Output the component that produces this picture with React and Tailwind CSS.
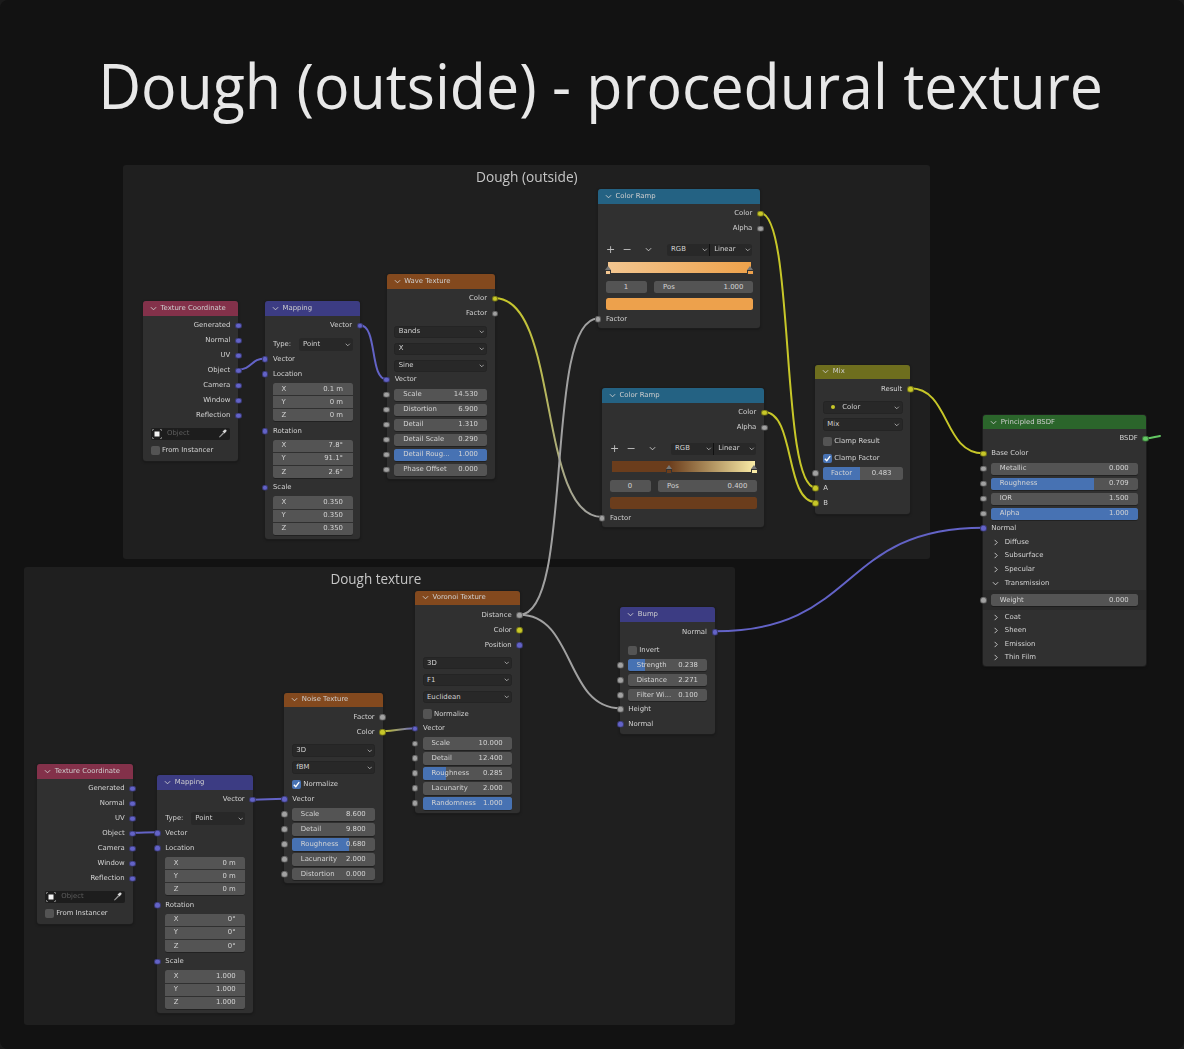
import React from "react";

const BLUE = "#6363c7", GRAY = "#a1a1a1", YEL = "#c7c729", GRN = "#63c763";

function Chev({ className = "", right = false }) {
  return (
    <svg viewBox="0 0 8 8" className={"shrink-0 " + className} fill="none" stroke="currentColor" strokeWidth="1">
      <path d={right ? "M3 1 L6 4 L3 7" : "M1 2.5 L4 5.5 L7 2.5"} />
    </svg>
  );
}

function Socket({ color, side }) {
  return (
    <span
      className={"absolute top-1/2 -translate-y-1/2 w-[6.6px] h-[6.6px] rounded-full border-[0.5px] border-black/40 z-10 " + (side === "left" ? "-left-[3.3px]" : "-right-[3.3px]")}
      style={{ backgroundColor: color }}
    />
  );
}

function Node({ className, head, title, children }) {
  return (
    <div className={"absolute rounded-[3px] bg-[#303030] shadow-[0_0_0_1px_#1c1c1c,0_1px_3px_rgba(0,0,0,0.45)] flex flex-col text-[#d4d4d4] text-[6.9px] leading-none [font-family:'DejaVu_Sans',sans-serif] blur-[0.3px] " + className}>
      <div className={"h-[14.3px] shrink-0 rounded-t-[3px] flex items-center pl-[7px] gap-[3.5px] text-[#cfcfcf] " + head}>
        <Chev className="w-[7px] h-[7px]" />
        <span className="whitespace-nowrap">{title}</span>
      </div>
      {children}
    </div>
  );
}

function Out({ label, color, className = "" }) {
  return (
    <div className={"relative h-[15px] shrink-0 flex items-center justify-end pr-[8px] " + className}>
      <span>{label}</span>
      <Socket color={color} side="right" />
    </div>
  );
}

function In({ label, color, className = "" }) {
  return (
    <div className={"relative h-[15px] shrink-0 flex items-center pl-[8px] " + className}>
      <span>{label}</span>
      <Socket color={color} side="left" />
    </div>
  );
}

function Slider({ label, value, fill = 0, className = "", socket = true }) {
  return (
    <div className={"relative h-[15px] shrink-0 flex items-center px-[7.5px] " + className}>
      {socket && <Socket color={GRAY} side="left" />}
      <div className="relative flex-1 h-[12.5px] rounded-[2.5px] bg-[#545454] overflow-hidden flex items-center justify-between pl-[9px] pr-[9.5px] shadow-[0_1px_0_rgba(0,0,0,0.3)]">
        {fill > 0 && <div className="absolute left-0 top-0 bottom-0 bg-[#4772b3]" style={{ width: fill * 100 + "%" }} />}
        <span className="relative whitespace-nowrap">{label}</span>
        <span className="relative whitespace-nowrap">{value}</span>
      </div>
    </div>
  );
}

function Drop({ label, className = "", dot = false }) {
  return (
    <div className={"h-[17px] shrink-0 flex items-center px-[7.5px] " + className}>
      <div className="flex-1 h-[12.5px] rounded-[2.5px] bg-[#282828] border border-[#242424] flex items-center justify-between pl-[3.5px] pr-[2px]">
        <span className="flex items-center gap-[7px]">
          {dot && <span className="w-[4px] h-[4px] rounded-full ml-[4px] bg-[#c7c729]" />}
          {label}
        </span>
        <Chev className="w-[5.5px] h-[5.5px]" />
      </div>
    </div>
  );
}

function Check({ label, checked = false, className = "" }) {
  return (
    <div className={"h-[17px] shrink-0 flex items-center pl-[7.5px] gap-[2px] " + className}>
      <span className={"w-[9.5px] h-[9.5px] rounded-[2px] flex items-center justify-center " + (checked ? "bg-[#4772b3]" : "bg-[#545454]")}>
        {checked && (
          <svg viewBox="0 0 10 10" className="w-[9px] h-[9px]" fill="none" stroke="#fff" strokeWidth="1.5">
            <path d="M2 5.2 L4.2 7.4 L8 2.4" />
          </svg>
        )}
      </span>
      <span>{label}</span>
    </div>
  );
}

function Xyz({ rows, className = "" }) {
  return (
    <div className={"mx-[7.5px] mt-[1.3px] shrink-0 flex flex-col gap-[1px] rounded-[2.5px] overflow-hidden shadow-[0_1px_0_rgba(0,0,0,0.3)] " + className}>
      {rows.map(([a, v]) => (
        <div key={a} className="h-[12.1px] bg-[#545454] flex items-center justify-between pl-[9px] pr-[9.5px]">
          <span>{a}</span>
          <span>{v}</span>
        </div>
      ))}
    </div>
  );
}

function TexCoord({ className }) {
  return (
    <Node className={className} head="bg-[#83314a]" title="Texture Coordinate">
      <div className="h-[2.5px] shrink-0" />
      {["Generated", "Normal", "UV", "Object", "Camera", "Window", "Reflection"].map((l) => (
        <Out key={l} label={l} color={BLUE} />
      ))}
      <div className="mt-[4.5px] mx-[8px] h-[12px] shrink-0 rounded-[2px] bg-[#1d1d1d] flex items-center pl-[1px] pr-[3px]">
        <svg viewBox="0 0 10 10" className="w-[10px] h-[10px] shrink-0">
          <rect x="2.5" y="2.5" width="5" height="5" fill="#f2f2f2" />
          <path d="M0.5 2 V0.5 H2 M8 0.5 H9.5 V2 M9.5 8 V9.5 H8 M2 9.5 H0.5 V8" stroke="#8a8a8a" fill="none" strokeWidth="0.8" />
        </svg>
        <span className="ml-[5px] text-[#5e5e5e] flex-1">Object</span>
        <svg viewBox="0 0 10 10" className="w-[9px] h-[9px] shrink-0">
          <path d="M1 9 L5.5 3.8 L6.8 5 L2 9.5 Z" fill="#9a9a9a" />
          <path d="M5 2.8 L7.2 5 L9.4 2.4 C10 1.4 8.6 0 7.6 0.6 Z" fill="#d8d8d8" />
        </svg>
      </div>
      <Check label="From Instancer" className="mt-[2.5px] mb-[2px]" />
    </Node>
  );
}

function Mapping({ className, loc, rot, scale }) {
  return (
    <Node className={className} head="bg-[#3c3c83]" title="Mapping">
      <div className="h-[2.8px] shrink-0" />
      <Out label="Vector" color={BLUE} />
      <div className="mt-[3.4px] h-[15px] shrink-0 flex items-center pl-[8px] pr-[7.5px]">
        <span className="w-[26px]">Type:</span>
        <div className="flex-1 h-[12.5px] rounded-[2.5px] bg-[#282828] flex items-center justify-between pl-[4px] pr-[2px]">
          <span>Point</span>
          <Chev className="w-[5.5px] h-[5.5px]" />
        </div>
      </div>
      <In label="Vector" color={BLUE} />
      <In label="Location" color={BLUE} />
      <Xyz rows={[["X", loc[0]], ["Y", loc[1]], ["Z", loc[2]]]} className="mb-[2.1px]" />
      <In label="Rotation" color={BLUE} />
      <Xyz rows={[["X", rot[0]], ["Y", rot[1]], ["Z", rot[2]]]} className="mb-[2.1px]" />
      <In label="Scale" color={BLUE} />
      <Xyz rows={[["X", scale[0]], ["Y", scale[1]], ["Z", scale[2]]]} className="mb-[4.2px]" />
    </Node>
  );
}

function Handle({ className, color }) {
  return (
    <span className={"absolute top-[4px] w-[7px] h-[9.5px] flex flex-col items-center " + className}>
      <span className="w-0 h-0 border-x-[3px] border-x-transparent border-b-[4px] border-b-[#777]" />
      <span className={"w-[6.6px] h-[5px] border-[0.5px] border-[#333] " + color} />
    </span>
  );
}

function Ramp({ className, idx, pos, swatch, bar, handles }) {
  return (
    <Node className={className} head="bg-[#246283]" title="Color Ramp">
      <div className="h-[2.5px] shrink-0" />
      <Out label="Color" color={YEL} />
      <Out label="Alpha" color={GRAY} />
      <div className="mt-[6.3px] h-[15px] shrink-0 flex items-center pl-[8px] pr-[8px]">
        <span className="w-[16.5px] text-[11px] leading-none text-[#bdbdbd]">+</span>
        <span className="w-[16.5px] text-[11px] leading-none text-[#bdbdbd]">−</span>
        <Chev className="w-[7px] h-[7px] ml-[5.5px] mr-[15.5px]" />
        <div className="flex-1 h-[12px] rounded-[2.5px] bg-[#282828] flex items-center">
          <div className="flex-1 h-full flex items-center justify-between pl-[4px] pr-[1.5px] border-r border-[#111]">
            <span>RGB</span>
            <Chev className="w-[5.5px] h-[5.5px]" />
          </div>
          <div className="flex-1 h-full flex items-center justify-between pl-[4px] pr-[1.5px]">
            <span>Linear</span>
            <Chev className="w-[5.5px] h-[5.5px]" />
          </div>
        </div>
      </div>
      <div className={"relative mt-[4.2px] mx-[9.6px] h-[11.7px] shrink-0 " + bar}>
        {handles}
      </div>
      <div className="mt-[8px] mx-[7.5px] h-[12px] shrink-0 flex gap-[7px]">
        <div className="w-[41px] rounded-[2.5px] bg-[#545454] flex items-center justify-center">{idx}</div>
        <div className="flex-1 rounded-[2.5px] bg-[#545454] flex items-center justify-between pl-[9.5px] pr-[9.5px]">
          <span>Pos</span>
          <span>{pos}</span>
        </div>
      </div>
      <div className={"mt-[5px] mx-[7.5px] h-[11.6px] shrink-0 rounded-[2.5px] " + swatch} />
      <In label="Factor" color={GRAY} className="mt-[1.7px] mb-[1.8px]" />
    </Node>
  );
}

function Panel({ label, open = false, className = "" }) {
  return (
    <div className={"h-[13.6px] shrink-0 flex items-center pl-[8.5px] gap-[6px] " + className}>
      <Chev className="w-[7px] h-[7px]" right={!open} />
      <span>{label}</span>
    </div>
  );
}

function Wire({ d, stroke, width = 2 }) {
  return <path d={d} fill="none" stroke={stroke} strokeWidth={width} strokeLinecap="round" />;
}

export default function App() {
  return (
    <div className="relative w-[1184px] h-[1049px] overflow-hidden bg-[#1b1b1b]">
      <div className="absolute inset-0 rounded-[8px] bg-[#121212]" />
      <h1 className="relative pt-[47px] pl-[18px] text-center text-[62px] leading-[76px] font-normal text-[#e8e8e8] whitespace-nowrap scale-x-[0.953] [font-family:'Open_Sans',sans-serif]">
        Dough (outside) - procedural texture
      </h1>

      <div className="absolute left-[123px] top-[165px] w-[807px] h-[394px] rounded-[3px] bg-[#1f1f1f] text-center pt-[3px] text-[14.5px] leading-[18px] text-[#c6c6c6] [font-family:'Open_Sans',sans-serif]">
        <span className="inline-block scale-x-[0.945]">Dough (outside)</span>
      </div>
      <div className="absolute left-[24px] top-[567px] w-[711px] h-[458px] rounded-[3px] bg-[#1f1f1f] text-center pt-[3px] pr-[7px] text-[14.5px] leading-[18px] text-[#c6c6c6] [font-family:'Open_Sans',sans-serif]">
        <span className="inline-block scale-x-[0.93]">Dough texture</span>
      </div>

      <svg className="absolute inset-0 w-[1184px] h-[1049px] blur-[0.3px]" viewBox="0 0 1184 1049">
        <defs>
          <linearGradient id="yg" gradientUnits="userSpaceOnUse" x1="495" y1="298" x2="602" y2="517">
            <stop offset="0" stopColor="#c7c729" />
            <stop offset="1" stopColor="#a1a1a1" />
          </linearGradient>
          <linearGradient id="yb" gradientUnits="userSpaceOnUse" x1="383" y1="731" x2="415" y2="728">
            <stop offset="0" stopColor="#c7c729" />
            <stop offset="1" stopColor="#6363c7" />
          </linearGradient>
        </defs>
        <Wire d="M238 369.5 C252 369.5 251 358.5 265 358.5" stroke={BLUE} />
        <Wire d="M360 325.3 C378 325.3 369 379.6 387 379.6" stroke={BLUE} />
        <Wire d="M495 298.3 C560 298.3 537 517 602 517" stroke="url(#yg)" />
        <Wire d="M519.7 614.7 C575 614.7 543 318.5 598 318.5" stroke="#a1a1a1" />
        <Wire d="M519.7 614.7 C575 614.7 565 708.3 620.3 708.3" stroke="#a1a1a1" />
        <Wire d="M760.3 213 C795 213 780 487.5 815.3 487.5" stroke={YEL} />
        <Wire d="M764.3 412 C795 412 785 502 815.3 502" stroke={YEL} />
        <Wire d="M910.3 388.3 C950 388.3 943 453.3 983.3 453.3" stroke={YEL} />
        <Wire d="M715 631.3 C860 631.3 838 527.7 983.3 527.7" stroke={BLUE} />
        <Wire d="M382.7 731.3 C398 731.3 399 728.3 415 728.3" stroke="url(#yb)" />
        <Wire d="M132.7 832.7 C145 832.7 145 832.3 157.3 832.3" stroke={BLUE} />
        <Wire d="M252.7 799.7 C268 799.7 268 798.7 284.3 798.7" stroke={BLUE} />
        <Wire d="M1145.7 438.3 C1152 438.3 1154 437 1160 436" stroke={GRN} />
      </svg>

      <TexCoord className="left-[143px] top-[301.3px] w-[95.3px]" />
      <Mapping className="left-[265px] top-[301.3px] w-[95px]" loc={["0.1 m", "0 m", "0 m"]} rot={["7.8°", "91.1°", "2.6°"]} scale={["0.350", "0.350", "0.350"]} />

      <Node className="left-[386.7px] top-[274.3px] w-[108.3px]" head="bg-[#83491e]" title="Wave Texture">
        <div className="h-[2.5px] shrink-0" />
        <Out label="Color" color={YEL} />
        <Out label="Factor" color={GRAY} />
        <Drop label="Bands" className="mt-[2.3px]" />
        <Drop label="X" />
        <Drop label="Sine" className="-mb-[2px]" />
        <In label="Vector" color={BLUE} />
        <Slider label="Scale" value="14.530" />
        <Slider label="Distortion" value="6.900" />
        <Slider label="Detail" value="1.310" />
        <Slider label="Detail Scale" value="0.290" />
        <Slider label="Detail Roug..." value="1.000" fill={1} />
        <Slider label="Phase Offset" value="0.000" className="mb-[1.7px]" />
      </Node>

      <Ramp
        className="left-[598px] top-[189.3px] w-[162.3px]"
        idx="1"
        pos="1.000"
        swatch="bg-[#eda14c]"
        bar="bg-[linear-gradient(90deg,#f3c690,#eea24b)]"
        handles={
          <>
            <Handle className="-left-[3px]" color="bg-[#f3c690]" />
            <Handle className="-right-[3px]" color="bg-[#eda14c]" />
          </>
        }
      />
      <Ramp
        className="left-[602px] top-[388.3px] w-[162.3px]"
        idx="0"
        pos="0.400"
        swatch="bg-[#6b3d1c]"
        bar="bg-[linear-gradient(90deg,#6b3d1c_0%,#6b3d1c_40%,#f9eba6_100%)]"
        handles={
          <>
            <Handle className="left-[40%] -ml-[3.5px]" color="bg-[#6b3d1c]" />
            <Handle className="-right-[3px]" color="bg-[#f9eba6]" />
          </>
        }
      />

      <Node className="left-[815.3px] top-[364.7px] w-[95px]" head="bg-[#6e6e1e]" title="Mix">
        <div className="h-[2.6px] shrink-0" />
        <Out label="Result" color={YEL} />
        <Drop label="Color" dot className="mt-[2.4px]" />
        <Drop label="Mix" />
        <Check label="Clamp Result" />
        <Check label="Clamp Factor" checked className="-mb-[1px]" />
        <div className="relative h-[15px] shrink-0 flex items-center px-[7.5px]">
          <Socket color={GRAY} side="left" />
          <div className="relative flex-1 h-[12.5px] rounded-[2.5px] bg-[#545454] overflow-hidden flex items-center">
            <div className="absolute left-0 top-0 bottom-0 bg-[#4772b3]" style={{ width: "47%" }} />
            <span className="relative w-[37.5px] text-center">Factor</span>
            <span className="relative flex-1 text-center">0.483</span>
          </div>
        </div>
        <In label="A" color={YEL} />
        <In label="B" color={YEL} className="mb-[3px]" />
      </Node>

      <Node className="left-[983.3px] top-[415px] w-[162.4px]" head="bg-[#2b652b]" title="Principled BSDF">
        <div className="h-[2.1px] shrink-0" />
        <Out label="BSDF" color={GRN} />
        <In label="Base Color" color={YEL} />
        <Slider label="Metallic" value="0.000" />
        <Slider label="Roughness" value="0.709" fill={0.7} />
        <Slider label="IOR" value="1.500" />
        <Slider label="Alpha" value="1.000" fill={1} className="-mb-[0.6px]" />
        <In label="Normal" color={BLUE} className="-mb-[0.3px]" />
        <Panel label="Diffuse" />
        <Panel label="Subsurface" />
        <Panel label="Specular" />
        <Panel label="Transmission" open />
        <div className="bg-[#2a2a2a] py-[2.7px] shrink-0">
          <Slider label="Weight" value="0.000" />
        </div>
        <Panel label="Coat" />
        <Panel label="Sheen" />
        <Panel label="Emission" />
        <Panel label="Thin Film" className="mb-[1.2px]" />
      </Node>

      <TexCoord className="left-[37.3px] top-[764.3px] w-[95.4px]" />
      <Mapping className="left-[157.3px] top-[775.3px] w-[95.4px]" loc={["0 m", "0 m", "0 m"]} rot={["0°", "0°", "0°"]} scale={["1.000", "1.000", "1.000"]} />

      <Node className="left-[284.3px] top-[692.7px] w-[98.4px]" head="bg-[#83491e]" title="Noise Texture">
        <div className="h-[2.8px] shrink-0" />
        <Out label="Factor" color={GRAY} />
        <Out label="Color" color={YEL} />
        <Drop label="3D" className="mt-[2.2px]" />
        <Drop label="fBM" />
        <Check label="Normalize" checked className="-mb-[1px]" />
        <In label="Vector" color={BLUE} />
        <Slider label="Scale" value="8.600" />
        <Slider label="Detail" value="9.800" />
        <Slider label="Roughness" value="0.680" fill={0.68} />
        <Slider label="Lacunarity" value="2.000" className="-mb-[0.5px]" />
        <Slider label="Distortion" value="0.000" className="mb-[2px]" />
      </Node>

      <Node className="left-[415px] top-[590.7px] w-[104.7px]" head="bg-[#83491e]" title="Voronoi Texture">
        <div className="h-[2.5px] shrink-0" />
        <Out label="Distance" color={GRAY} />
        <Out label="Color" color={YEL} />
        <Out label="Position" color={BLUE} />
        <Drop label="3D" className="mt-[2.2px]" />
        <Drop label="F1" />
        <Drop label="Euclidean" />
        <Check label="Normalize" className="-mb-[1.5px]" />
        <In label="Vector" color={BLUE} />
        <Slider label="Scale" value="10.000" className="-mb-[0.4px]" />
        <Slider label="Detail" value="12.400" />
        <Slider label="Roughness" value="0.285" fill={0.26} />
        <Slider label="Lacunarity" value="2.000" />
        <Slider label="Randomness" value="1.000" fill={1} className="mb-[2.5px]" />
      </Node>

      <Node className="left-[620.3px] top-[607.3px] w-[94.7px]" head="bg-[#3c3c83]" title="Bump">
        <div className="h-[2.9px] shrink-0" />
        <Out label="Normal" color={BLUE} />
        <Check label="Invert" className="mt-[2.5px] -mb-[1.5px]" />
        <Slider label="Strength" value="0.238" fill={0.22} />
        <Slider label="Distance" value="2.271" />
        <Slider label="Filter Wi..." value="0.100" className="-mb-[0.7px]" />
        <In label="Height" color={GRAY} />
        <In label="Normal" color={BLUE} className="mb-[2px]" />
      </Node>
    </div>
  );
}
